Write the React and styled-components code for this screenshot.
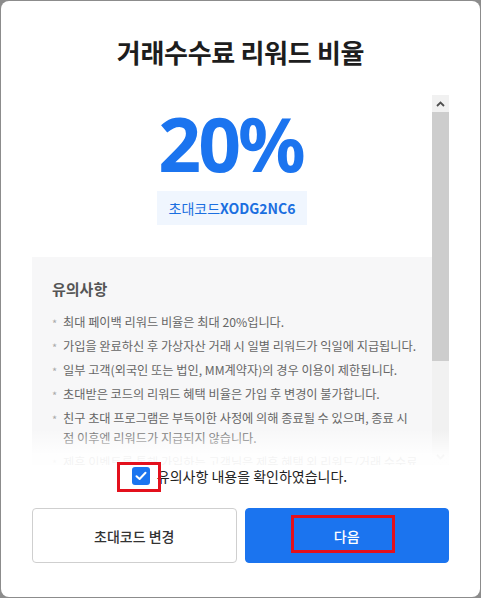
import React, { useState } from 'react';
import styled, { createGlobalStyle } from 'styled-components';

const GlobalStyle = createGlobalStyle`
  html, body {
    margin: 0;
    padding: 0;
    background: #8c8c8c;
  }
  body {
    font-family: "Noto Sans CJK KR", "Noto Sans", sans-serif;
  }
  * { box-sizing: border-box; }
`;

const Modal = styled.div`
  margin: 1px;
  width: 479px;
  height: 596px;
  background: #fff;
  border-radius: 8px;
  padding: 0 31px;
  display: flex;
  flex-direction: column;
`;

const Title = styled.h1`
  margin: 33px 0 0;
  font-size: 26px;
  line-height: 36px;
  font-weight: 700;
  color: #1d1d1d;
  text-align: center;
  letter-spacing: -0.3px;
`;

const ScrollWrap = styled.div`
  position: relative;
  margin-top: 25px;
  height: 370px;
  display: flex;
`;

const Scroller = styled.div`
  flex: 1;
  height: 100%;
  overflow-y: scroll;
  scrollbar-width: none;
  &::-webkit-scrollbar { display: none; }
`;

const ScrollBar = styled.div`
  width: 17px;
  flex: none;
  display: flex;
  flex-direction: column;
  background: #f1f1f1;
`;

const ScrollArrow = styled.div`
  height: 17px;
  display: flex;
  align-items: center;
  justify-content: center;
`;

const Thumb = styled.div`
  height: 249px;
  background: #cdcdcd;
`;

const Track = styled.div`
  flex: 1;
`;

const Fade = styled.div`
  position: absolute;
  left: 0;
  right: 0;
  bottom: 0;
  height: 36px;
  background: linear-gradient(rgba(255, 255, 255, 0), rgba(255, 255, 255, 0.92) 75%);
  pointer-events: none;
`;

const Hero = styled.div`
  display: flex;
  flex-direction: column;
  align-items: center;
  padding-top: 4px;
`;

const Rate = styled.div`
  font-family: "Noto Sans", sans-serif;
  font-size: 75px;
  line-height: 88px;
  font-weight: 700;
  color: #1b74ef;
  letter-spacing: -3px;
  padding-right: 3px;
`;

const CodeBadge = styled.div`
  margin-top: 4px;
  height: 34px;
  padding: 0 12px;
  display: flex;
  align-items: center;
  background: #f0f6fe;
  color: #1b6fe0;
  font-size: 14px;
  b { font-weight: 700; }
`;

const Notice = styled.div`
  margin-top: 32px;
  background: #f7f7f8;
  padding: 21px 6px 40px 20px;
`;

const NoticeTitle = styled.div`
  font-size: 15px;
  font-weight: 700;
  color: #555;
  line-height: 22px;
`;

const List = styled.ul`
  list-style: none;
  margin: 12px 0 0;
  padding: 0;
  display: flex;
  flex-direction: column;
  gap: 4px;
`;

const Item = styled.li`
  position: relative;
  padding-left: 11px;
  font-size: 12.2px;
  line-height: 20px;
  color: #666;
  &::before {
    content: '*';
    position: absolute;
    left: 0;
    top: 1px;
    color: #aaa;
    font-size: 11px;
  }
`;

const CheckRow = styled.label`
  display: flex;
  align-items: center;
  justify-content: center;
  gap: 7px;
  height: 22px;
  font-size: 14px;
  color: #222;
  cursor: pointer;
  padding-right: 2px;
`;

const BoxHolder = styled.span`
  position: relative;
  display: flex;
`;

const Box = styled.span`
  width: 18px;
  height: 18px;
  border-radius: 3px;
  background: ${p => (p.$on ? '#1b74ef' : '#fff')};
  border: ${p => (p.$on ? 'none' : '1px solid #bbb')};
  display: flex;
  align-items: center;
  justify-content: center;
`;

const Mark = styled.span`
  position: absolute;
  border: 3px solid #e3101c;
  pointer-events: none;
  left: ${p => p.$l}px;
  top: ${p => p.$t}px;
  width: ${p => p.$w}px;
  height: ${p => p.$h}px;
`;

const Buttons = styled.div`
  margin-top: 21px;
  display: grid;
  grid-template-columns: 1fr 1fr;
  gap: 8px;
`;

const Button = styled.button`
  position: relative;
  height: 55px;
  border-radius: 4px;
  font-family: inherit;
  font-size: 14px;
  font-weight: 500;
  cursor: pointer;
  border: 1px solid ${p => (p.$primary ? '#1b74ef' : '#cfcfcf')};
  background: ${p => (p.$primary ? '#1b74ef' : '#fff')};
  color: ${p => (p.$primary ? '#fff' : '#333')};
`;

const Chevron = ({ up, color }) => (
  <svg width="9" height="6" viewBox="0 0 9 6">
    <path
      d={up ? 'M1 5 L4.5 1.5 L8 5' : 'M1 1 L4.5 4.5 L8 1'}
      fill="none"
      stroke={color}
      strokeWidth="1.8"
    />
  </svg>
);

const notes = [
  '최대 페이백 리워드 비율은 최대 20%입니다.',
  '가입을 완료하신 후 가상자산 거래 시 일별 리워드가 익일에 지급됩니다.',
  '일부 고객(외국인 또는 법인, MM계약자)의 경우 이용이 제한됩니다.',
  '초대받은 코드의 리워드 혜택 비율은 가입 후 변경이 불가합니다.',
  <>친구 초대 프로그램은 부득이한 사정에 의해 종료될 수 있으며, 종료 시<br />점 이후엔 리워드가 지급되지 않습니다.</>,
  '제휴 이벤트를 통해 가입하는 고객님은 제휴 혜택 외 리워드/거래 수수료 혜택이 제공되지 않습니다.',
  '리워드 지급 기준 및 비율은 회사 정책에 따라 변경될 수 있습니다.',
];

export default function App() {
  const [checked, setChecked] = useState(true);

  return (
    <>
      <GlobalStyle />
      <Modal>
        <Title>거래수수료 리워드 비율</Title>
        <ScrollWrap>
          <Scroller>
            <Hero>
              <Rate>20%</Rate>
              <CodeBadge>
                초대코드<b>XODG2NC6</b>
              </CodeBadge>
            </Hero>
            <Notice>
              <NoticeTitle>유의사항</NoticeTitle>
              <List>
                {notes.map((n, i) => (
                  <Item key={i}>{n}</Item>
                ))}
              </List>
            </Notice>
          </Scroller>
          <ScrollBar>
            <ScrollArrow>
              <Chevron up color="#505050" />
            </ScrollArrow>
            <Thumb />
            <Track />
            <ScrollArrow>
              <Chevron color="#a3a3a3" />
            </ScrollArrow>
          </ScrollBar>
          <Fade />
        </ScrollWrap>
        <CheckRow onClick={() => setChecked(c => !c)}>
          <BoxHolder>
            <Box $on={checked}>
              {checked && (
                <svg width="12" height="10" viewBox="0 0 12 10">
                  <path d="M1.5 5.2 L4.6 8 L10.5 1.8" fill="none" stroke="#fff" strokeWidth="2" strokeLinecap="round" strokeLinejoin="round" />
                </svg>
              )}
            </Box>
            <Mark $l={-15} $t={-5} $w={44} $h={30} />
          </BoxHolder>
          유의사항 내용을 확인하였습니다.
        </CheckRow>
        <Buttons>
          <Button>초대코드 변경</Button>
          <Button $primary>
            다음
            <Mark $l={45} $t={6} $w={104} $h={38} />
          </Button>
        </Buttons>
      </Modal>
    </>
  );
}
